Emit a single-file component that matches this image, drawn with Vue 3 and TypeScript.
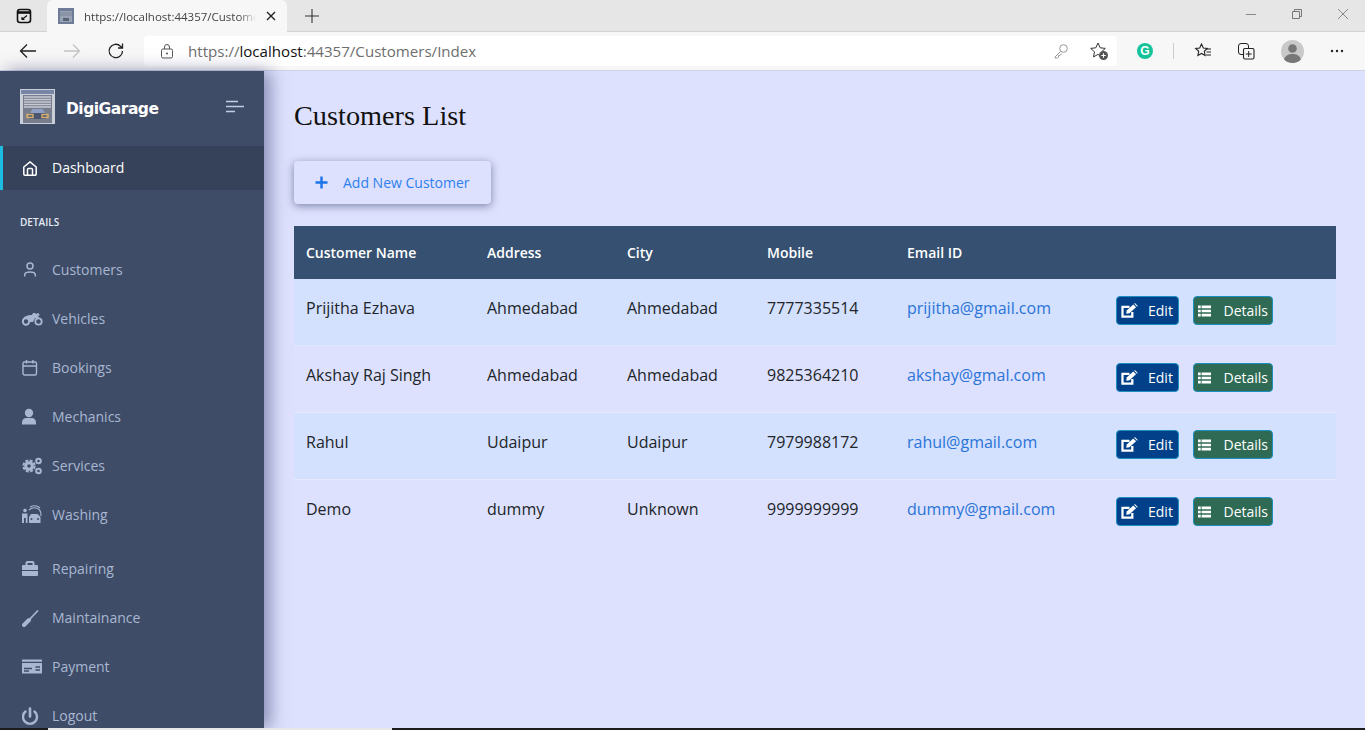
<template>
  <div class="window">
    <div class="tabstrip">
      <svg class="tab-actions" width="16" height="16" viewBox="0 0 16 16">
        <rect x="1.500" y="1.500" width="13" height="13" rx="2.500" fill="none" stroke="#111" stroke-width="1.600" />
        <path d="M1.500 4.500h13" stroke="#111" stroke-width="2.600" />
        <path d="M11 7.500 6 11.500M6 9v2.500h2.500" fill="none" stroke="#111" stroke-width="1.200" />
      </svg>
      <div class="tab">
        <svg class="favicon" width="16" height="16" viewBox="0 0 16 16">
          <rect width="16" height="16" fill="#6f7c98" />
          <rect x="2" y="3" width="12" height="11" fill="#9aa3b5" />
          <path d="M2 5h12M2 7h12" stroke="#7a8499" />
          <rect x="5" y="10" width="6" height="3" fill="#596378" />
        </svg>
        <span class="tab-title">https://localhost:44357/Custome</span>
        <svg class="tab-close" width="10" height="10" viewBox="0 0 10 10">
          <path d="M1 1l8 8M9 1 1 9" stroke="#222" stroke-width="1.400" />
        </svg>
      </div>
      <svg class="new-tab" width="16" height="16" viewBox="0 0 16 16">
        <path d="M8 1v14M1 8h14" stroke="#333" stroke-width="1.100" />
      </svg>
      <div class="window-controls">
        <svg width="12" height="12" viewBox="0 0 12 12"><path d="M1 6.500h10" stroke="#888" /></svg>
        <svg width="12" height="12" viewBox="0 0 12 12">
          <path d="M1.500 3.500h7v7h-7zM3.500 3.500v-2h7v7h-2" fill="none" stroke="#777" />
        </svg>
        <svg width="12" height="12" viewBox="0 0 12 12"><path d="M1 1l10 10M11 1 1 11" stroke="#888" /></svg>
      </div>
    </div>

    <div class="toolbar">
      <svg class="nav-icon" width="18" height="16" viewBox="0 0 18 16">
        <path d="M17 8H1.500M8 1.500 1.500 8 8 14.500" fill="none" stroke="#222" stroke-width="1.300" />
      </svg>
      <svg class="nav-icon fwd" width="18" height="16" viewBox="0 0 18 16">
        <path d="M1 8h15.500M10 1.500 16.500 8 10 14.500" fill="none" stroke="#c4c4c4" stroke-width="1.300" />
      </svg>
      <svg class="nav-icon reload" width="18" height="18" viewBox="0 0 18 18">
        <path d="M15.500 9a6.700 6.700 0 1 1-2-4.800L15.500 6M15.500 1.500V6H11" fill="none" stroke="#222" stroke-width="1.300" />
      </svg>
      <div class="address">
        <svg width="14" height="16" viewBox="0 0 14 16">
          <rect x="1.500" y="6" width="11" height="9" rx="1.500" fill="none" stroke="#555" />
          <path d="M4.500 6V4a2.500 2.500 0 0 1 5 0v2" fill="none" stroke="#555" />
          <circle cx="7" cy="10.500" r="1" fill="#555" />
        </svg>
        <span class="url">https://<b>localhost</b>:44357/Customers/Index</span>
        <svg class="key" width="16" height="16" viewBox="0 0 16 16">
          <circle cx="10.500" cy="5.500" r="3.800" fill="none" stroke="#999" />
          <path d="M7.800 8.200 2 14v1h2.500l1-1v-1.500H7l1.500-2" fill="none" stroke="#999" />
        </svg>
        <svg class="fav" width="20" height="20" viewBox="0 0 20 20">
          <path d="M9 2l2.200 4.800 5.100.6-3.800 3.500 1 5L9 13.400 4.500 15.900l1-5L1.700 7.400l5.100-.6z" fill="none" stroke="#333" />
          <circle cx="14.500" cy="14.500" r="4.500" fill="#555" />
          <path d="M14.500 12.300v4.400M12.300 14.500h4.400" stroke="#fff" />
        </svg>
      </div>
      <div class="grammarly">G</div>
      <span class="divider"></span>
      <svg class="tool" width="18" height="18" viewBox="0 0 18 18">
        <path d="M7.500 2l1.800 4 4 .5-3 2.800.8 4.200-3.600-2.100-3.600 2.100.8-4.200-3-2.800 4-.5z" fill="none" stroke="#222" stroke-width="1.100" />
        <path d="M12 7h5M12.500 10h4.500M12 13h5" stroke="#222" />
      </svg>
      <svg class="tool collections" width="18" height="18" viewBox="0 0 18 18">
        <rect x="1.500" y="1.500" width="10" height="11" rx="2.500" fill="none" stroke="#222" />
        <rect x="6.500" y="6.500" width="10.500" height="10.500" rx="1.500" fill="#f7f7f7" stroke="#222" stroke-width="1.100" />
        <path d="M11.700 9v6M8.700 12h6" stroke="#222" />
      </svg>
      <div class="avatar">
        <svg width="23" height="23" viewBox="0 0 23 23">
          <circle cx="11.500" cy="8.500" r="4.300" fill="#777" />
          <path d="M3 20c1-5 5-6 8.500-6s7.500 1 8.500 6c-2 2-5 3-8.500 3S5 22 3 20z" fill="#777" />
        </svg>
      </div>
      <svg class="more" width="14" height="4" viewBox="0 0 14 4">
        <circle cx="2" cy="2" r="1.200" fill="#222" /><circle cx="7" cy="2" r="1.200" fill="#222" /><circle cx="12" cy="2" r="1.200" fill="#222" />
      </svg>
    </div>

    <div class="page">
      <aside class="sidebar">
        <div class="brand">
          <svg class="logo" width="35" height="35" viewBox="0 0 35 35">
            <rect width="35" height="35" fill="#c9ced9" />
            <rect x="1" y="1" width="33" height="4" fill="#7886a6" />
            <rect x="3" y="6" width="29" height="28" fill="#777d8c" />
            <path d="M4 8h27M4 10.500h27M4 13h27M4 15.500h27M4 18h27" stroke="#c6c9d1" stroke-width="1.500" />
            <path d="M10 24l2.500-4h10L25 24z" fill="#8fa0c4" />
            <rect x="9" y="24" width="17" height="6" rx="1" fill="#4a5670" />
            <path d="M7 25.500h6v3H7zM22 25.500h6v3h-6z" fill="none" stroke="#d8ae6c" stroke-width="1.400" />
          </svg>
          <span class="brand-name">DigiGarage</span>
          <svg class="collapse" width="18" height="13" viewBox="0 0 18 13">
            <path d="M0 1.500h12M0 6.500h18M0 11.500h9" stroke="#c3cde0" stroke-width="1.700" />
          </svg>
        </div>

        <a class="nav-item active">
          <svg width="14" height="15" viewBox="0 0 14 15">
            <path d="M.8 6 7 .9 13.200 6v7a1.200 1.200 0 0 1-1.200 1.200H2A1.200 1.200 0 0 1 .8 13z" fill="none" stroke="#fff" stroke-width="1.500" />
            <path d="M4.500 14V8.500a1 1 0 0 1 1-1h3a1 1 0 0 1 1 1V14" fill="none" stroke="#fff" stroke-width="1.500" />
          </svg>
          <span>Dashboard</span>
        </a>

        <div class="nav-heading">DETAILS</div>

        <a v-for="item in navItems" :key="item.label" class="nav-item" :class="item.cls">
          <svg width="21" height="20" viewBox="0 0 21 20" v-html="item.icon"></svg>
          <span>{{ item.label }}</span>
        </a>
      </aside>

      <main class="content">
        <h1>Customers List</h1>
        <button class="add-btn">
          <svg width="13" height="13" viewBox="0 0 13 13"><path d="M6.500 0.500v12M0.500 6.500h12" stroke="#1a73e8" stroke-width="2.400" /></svg>
          <span>Add New Customer</span>
        </button>

        <table>
          <thead>
            <tr>
              <th class="col-name">Customer Name</th>
              <th class="col-mid">Address</th>
              <th class="col-mid">City</th>
              <th class="col-mid">Mobile</th>
              <th class="col-email">Email ID</th>
              <th></th>
            </tr>
          </thead>
          <tbody>
            <tr v-for="c in customers" :key="c.email">
              <td>{{ c.name }}</td>
              <td>{{ c.address }}</td>
              <td>{{ c.city }}</td>
              <td>{{ c.mobile }}</td>
              <td><a class="mail">{{ c.email }}</a></td>
              <td class="actions">
                <button class="btn edit">
                  <svg width="17" height="15" viewBox="0 0 18 16">
                    <path d="M12 9.500V14.500H1.500V4H9" fill="none" stroke="#fff" stroke-width="2.400" />
                    <path d="M6 8 13 1.500 16 4.500 9 11 5.500 11.500z" fill="#fff" />
                    <path d="M14 .7l.8-.6 3 3-.6.8z" fill="#fff" />
                  </svg>
                  <span>Edit</span>
                </button>
                <button class="btn details">
                  <svg width="15" height="12" viewBox="0 0 15 12">
                    <path d="M0 0h3v3H0zM0 4.500h3v3H0zM0 9h3v3H0zM4 0H15v3H4zM4 4.500H15v3H4zM4 9H15v3H4z" fill="#fff" />
                  </svg>
                  <span>Details</span>
                </button>
              </td>
            </tr>
          </tbody>
        </table>
      </main>
    </div>

    <div class="taskbar">
      <span class="taskbar-light"></span>
    </div>
  </div>
</template>

<script setup lang="ts">
type Customer = {
  name: string;
  address: string;
  city: string;
  mobile: string;
  email: string;
};

type NavItem = {
  label: string;
  icon: string;
  cls?: string;
};

const c = '#a9b7d1';
const bg = '#3e4c68';

const navItems: NavItem[] = [
  {
    label: 'Customers',
    icon: `<circle cx="8" cy="6" r="3" fill="none" stroke="${c}" stroke-width="1.500"/><path d="M2.700 16.500v-1.500c0-2 1.800-3 5.300-3s5.300 1 5.300 3v1.500" fill="none" stroke="${c}" stroke-width="1.500"/>`,
  },
  {
    label: 'Vehicles',
    icon: `<circle cx="4" cy="12.500" r="3.200" fill="none" stroke="${c}" stroke-width="2"/><circle cx="16.500" cy="12.500" r="3.200" fill="none" stroke="${c}" stroke-width="1.800"/><path d="M1 10c1-3 5-4 9-4l1-2h2l1 1 2-1 2 2-2 1 2 3-5-1-2 4H7c0-3-2-4-6-3z" fill="${c}"/>`,
  },
  {
    label: 'Bookings',
    icon: `<rect x="1" y="4" width="13.500" height="13" rx="1.500" fill="none" stroke="${c}" stroke-width="1.400"/><path d="M1 8h13.500M4.500 2v3.500M11 2v3.500" stroke="${c}" stroke-width="1.400"/>`,
  },
  {
    label: 'Mechanics',
    icon: `<circle cx="7" cy="6" r="4.200" fill="${c}"/><path d="M0 17.500v-2c0-3 2-4.500 4-4.500h6c2 0 4 1.500 4 4.500v2z" fill="${c}"/>`,
  },
  {
    label: 'Services',
    icon: `<circle cx="7" cy="10" r="4.800" fill="${c}"/><circle cx="7" cy="10" r="5.600" fill="none" stroke="${c}" stroke-width="2" stroke-dasharray="3 1.400"/><circle cx="7" cy="10" r="1.800" fill="${bg}"/><circle cx="16.500" cy="5" r="2.300" fill="none" stroke="${c}" stroke-width="2"/><circle cx="16.500" cy="15" r="2.300" fill="none" stroke="${c}" stroke-width="2"/>`,
  },
  {
    label: 'Washing',
    cls: 'tall',
    icon: `<circle cx="3" cy="5.500" r="1.800" fill="${c}"/><path d="M0 8.500h5.500V18H3.800v-5H2v5H0z" fill="${c}"/><path d="M7 12l2-3h6.500l3 3v6H7z" fill="${c}"/><circle cx="9.500" cy="14" r="1" fill="${bg}"/><circle cx="16" cy="14" r="1" fill="${bg}"/><path d="M7 5c3-3 8-3 10.500 0 1.500 1.500 1.500 4 1.500 6M8 2c4-2 8-1 10 1" fill="none" stroke="${c}" stroke-width="1.100"/>`,
  },
  {
    label: 'Repairing',
    icon: `<path d="M4.500 6V4a1 1 0 0 1 1-1h5a1 1 0 0 1 1 1v2" fill="none" stroke="${c}" stroke-width="2"/><path d="M0 7a1 1 0 0 1 1-1h14a1 1 0 0 1 1 1v4H0zM0 12h16v4a1 1 0 0 1-1 1H1a1 1 0 0 1-1-1z" fill="${c}"/>`,
  },
  {
    label: 'Maintainance',
    icon: `<path d="M2 17l5-5" stroke="${c}" stroke-width="4" stroke-linecap="round"/><path d="M7 12l8.500-9" stroke="${c}" stroke-width="1.800" stroke-linecap="round"/>`,
  },
  {
    label: 'Payment',
    icon: `<path d="M0 2.500h20v2.300H0zM0 6h20v10.500H0z" fill="${c}"/><path d="M2 11.500h8M2 14h5M13.500 10h4.500M13.500 13h4.500" stroke="${bg}" stroke-width="1.300"/>`,
  },
  {
    label: 'Logout',
    icon: `<path d="M3.500 5.500a7 7 0 1 0 9 0" fill="none" stroke="${c}" stroke-width="2.400" stroke-linecap="round"/><path d="M8 2.500v8" stroke="${c}" stroke-width="2.600" stroke-linecap="round"/>`,
  },
];

const customers: Customer[] = [
  { name: 'Prijitha Ezhava', address: 'Ahmedabad', city: 'Ahmedabad', mobile: '7777335514', email: 'prijitha@gmail.com' },
  { name: 'Akshay Raj Singh', address: 'Ahmedabad', city: 'Ahmedabad', mobile: '9825364210', email: 'akshay@gmal.com' },
  { name: 'Rahul', address: 'Udaipur', city: 'Udaipur', mobile: '7979988172', email: 'rahul@gmail.com' },
  { name: 'Demo', address: 'dummy', city: 'Unknown', mobile: '9999999999', email: 'dummy@gmail.com' },
];
</script>

<style>
html,
body {
  margin: 0;
  overflow: hidden;
}
</style>

<style scoped>
.window {
  width: 1365px;
  height: 730px;
  display: flex;
  flex-direction: column;
  overflow: hidden;
  font-family: "Open Sans", sans-serif;
}

.tabstrip {
  height: 32px;
  flex: none;
  background: #e6e6e6;
  display: flex;
  align-items: flex-start;
  border-bottom: 1px solid #d2d2d2;
  box-sizing: border-box;
}

.tab-actions {
  margin: 8px 0 0 16px;
}

.tab {
  margin: 0 0 0 15px;
  width: 240px;
  height: 32px;
  box-sizing: border-box;
  background: #f7f7f7;
  border-radius: 6px 6px 0 0;
  display: flex;
  align-items: center;
  padding: 0 11px;
  gap: 10px;
}

.tab-title {
  flex: none;
  font-family: "Open Sans", sans-serif;
  font-size: 11.500px;
  color: #444;
  width: 172px;
  white-space: nowrap;
  -webkit-mask-image: linear-gradient(to right, #000 90%, transparent);
  mask-image: linear-gradient(to right, #000 90%, transparent);
}

.new-tab {
  margin: 8px 0 0 17px;
}

.window-controls {
  margin-left: auto;
  display: flex;
  gap: 34px;
  padding: 8px 16px 0 0;
}

.toolbar {
  height: 39px;
  flex: none;
  background: #f7f7f7;
  display: flex;
  align-items: center;
  border-bottom: 1px solid #cfd2e6;
  box-sizing: border-box;
}

.nav-icon {
  margin-left: 19px;
  flex: none;
}

.fwd {
  margin-left: 26px;
}

.reload {
  margin-left: 26px;
}

.address {
  margin-left: 19px;
  width: 973px;
  height: 30px;
  background: #fff;
  border-radius: 4px;
  display: flex;
  align-items: center;
  padding: 0 8px 0 16px;
  box-sizing: border-box;
}

.url {
  font-family: "Open Sans", sans-serif;
  font-size: 15.100px;
  color: #6e6e6e;
  margin-left: 14px;
}

.url b {
  font-weight: 400;
  color: #111;
}

.key {
  margin-left: auto;
}

.fav {
  margin-left: 20px;
}

.grammarly {
  width: 16px;
  height: 16px;
  border-radius: 50%;
  background: #15c39a;
  color: #fff;
  font-family: "Liberation Sans", sans-serif;
  font-weight: 700;
  font-size: 12px;
  line-height: 16px;
  text-align: center;
  margin-left: 20px;
}

.divider {
  width: 1px;
  height: 16px;
  background: #ccc;
  margin-left: 20px;
}

.tool {
  margin-left: 20px;
  flex: none;
}

.collections {
  margin-left: 25px;
}

.avatar {
  width: 23px;
  height: 23px;
  border-radius: 50%;
  background: #c9c9c9;
  overflow: hidden;
  margin-left: 26px;
}

.more {
  margin-left: 26px;
}

.page {
  flex: 1;
  min-height: 0;
  display: flex;
  background: #dde1fd;
}

.sidebar {
  width: 264px;
  flex: none;
  background: #3e4c68;
  box-shadow: 6px 0 16px rgba(50, 55, 110, 0.5);
  position: relative;
  z-index: 1;
  overflow: hidden;
}

.brand {
  height: 75px;
  display: flex;
  align-items: center;
  padding: 0 20px;
}

.logo {
  margin-top: -4px;
}

.brand-name {
  font-family: "DejaVu Sans", sans-serif;
  font-weight: 700;
  font-size: 15.500px;
  letter-spacing: -0.5px;
  color: #fff;
  margin-left: 11px;
}

.collapse {
  margin-top: -4px;
  margin-left: auto;
}

.nav-item {
  height: 49px;
  display: flex;
  align-items: center;
  padding-left: 22px;
  color: #a9b7d1;
  font-size: 14px;
  gap: 9px;
  box-sizing: border-box;
}

.nav-item > span {
  line-height: 1;
}

.nav-item.active {
  height: 44px;
  background: #364259;
  border-left: 3px solid #1cbbe0;
  padding-left: 20px;
  color: #fff;
  gap: 15px;
}

.nav-item.tall {
  height: 54px;
  padding-bottom: 5px;
}

.nav-heading {
  height: 55px;
  display: flex;
  align-items: center;
  padding: 8px 0 0 20px;
  box-sizing: border-box;
  font-size: 10px;
  font-weight: 600;
  color: #e4e9f2;
}

.content {
  flex: 1;
  min-width: 0;
  padding: 26px 29px 0 30px;
}

h1 {
  margin: 0;
  font-family: "Liberation Serif", serif;
  font-weight: 400;
  font-size: 28.300px;
  line-height: 38px;
  color: #111;
}

.add-btn {
  margin-top: 26px;
  width: 197px;
  height: 43px;
  padding: 0 0 0 21px;
  border: none;
  border-radius: 4px;
  background: #dde1fd;
  box-shadow: 0 2px 8px rgba(50, 55, 100, 0.55);
  display: flex;
  align-items: center;
  gap: 15px;
  color: #2f80ed;
  font-family: inherit;
  font-size: 14px;
}

table {
  margin-top: 22px;
  width: 100%;
  table-layout: fixed;
  border-collapse: separate;
  border-spacing: 0;
  color: #212529;
}

th {
  background: #355070;
  color: #fff;
  font-size: 14px;
  font-weight: 600;
  text-align: left;
  height: 53px;
  padding: 0 12px;
  box-sizing: border-box;
}

.col-name {
  width: 181px;
}

.col-mid {
  width: 140px;
}

.col-email {
  width: 209px;
}

td {
  height: 67px;
  padding: 0 12px 8px;
  box-sizing: border-box;
  font-size: 16px;
  border-bottom: 1px solid #e4e7fd;
  white-space: nowrap;
}

tbody tr:nth-child(odd) {
  background: #d3e0fe;
}

tbody tr:last-child td {
  border-bottom-color: transparent;
}

.mail {
  color: #2a74d8;
}

td.actions {
  padding-bottom: 3px;
}

.btn {
  height: 29px;
  border: 1px solid #1a8fc0;
  border-radius: 4px;
  color: #fff;
  font-family: inherit;
  font-size: 14px;
  display: inline-flex;
  align-items: center;
  padding: 0 4px 0 4px;
  vertical-align: middle;
  box-sizing: border-box;
}

.edit {
  width: 63px;
  background: #024089;
  gap: 10px;
}

.details {
  width: 80px;
  background: #2f6b54;
  margin-left: 14px;
  gap: 12px;
}

.taskbar {
  height: 2px;
  flex: none;
  background: #1c1c1c;
  position: relative;
  z-index: 2;
}

.taskbar-light {
  display: block;
  width: 344px;
  height: 2px;
  margin-left: 48px;
  background: #e8e8e8;
}
</style>
